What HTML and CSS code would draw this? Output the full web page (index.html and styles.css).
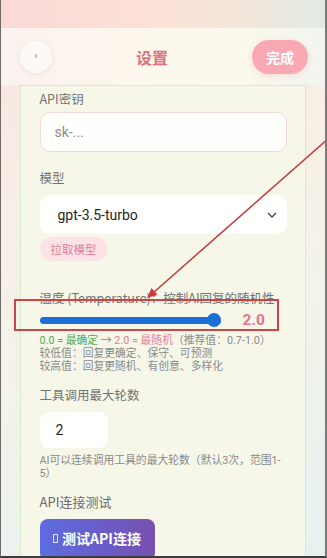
FILE: index.html
```html
<!DOCTYPE html>
<html lang="zh">
<head>
<meta charset="utf-8">
<title>设置</title>
<link rel="stylesheet" href="styles.css">
</head>
<body>
<div class="page">
  <div class="status"></div>
  <header class="header">
    <button class="back">‹</button>
    <h1 class="title">设置</h1>
    <button class="done">完成</button>
  </header>
  <main class="card">
    <div class="field">
      <label class="label">API密钥</label>
      <div class="input placeholder">sk-...</div>
    </div>
    <div class="field">
      <label class="label">模型</label>
      <div class="select">
        <span>gpt-3.5-turbo</span>
        <svg class="chev" width="10" height="6" viewBox="0 0 10 6"><path d="M1 1l4 4 4-4" fill="none" stroke="#444" stroke-width="1.3"/></svg>
      </div>
      <button class="fetch">拉取模型</button>
    </div>
    <div class="field temp">
      <label class="label">温度 (Temperature)：控制AI回复的随机性</label>
      <div class="slider-row">
        <div class="slider"><div class="track"></div><div class="thumb"></div></div>
        <span class="value">2.0</span>
      </div>
      <div class="desc">
        <div class="line"><span class="green">0.0 = 最确定</span> → <span class="pink">2.0 = 最随机</span>（推荐值：0.7-1.0）</div>
        <div class="line">较低值：回复更确定、保守、可预测</div>
        <div class="line">较高值：回复更随机、有创意、多样化</div>
      </div>
    </div>
    <div class="field tight">
      <label class="label">工具调用最大轮数</label>
      <div class="num">2</div>
      <div class="desc desc2">AI可以连续调用工具的最大轮数（默认3次，范围1-5）</div>
    </div>
    <div class="field tight">
      <label class="label label-test">API连接测试</label>
      <button class="test"><span class="tofu"></span>测试API连接</button>
    </div>
  </main>
  <div class="redbox"></div>
  <svg class="arrow" width="327" height="558" viewBox="0 0 327 558">
    <line x1="330" y1="137" x2="153" y2="293" stroke="#c23a3c" stroke-width="1.5"/>
    <polygon points="147,298 157.5,294.8 151.5,288" fill="#d0383a"/>
  </svg>
  <div class="frame"></div>
</div>
</body>
</html>
```
FILE: styles.css
```css
* { box-sizing: border-box; }
html, body { margin: 0; padding: 0; }
body {
  width: 327px;
  height: 558px;
  overflow: hidden;
  font-family: Roboto, "Noto Sans CJK SC", sans-serif;
}
.page {
  position: relative;
  width: 327px;
  height: 558px;
  overflow: hidden;
  background: linear-gradient(160deg, #f8e4de 0%, #f8efe6 35%, #f2f3ea 60%, #e6f1f0 100%);
}
.status {
  height: 28px;
  background: linear-gradient(90deg, #f8d9d6 0%, #fde1d6 45%, #f3e6da 75%, #e2eae4 100%);
}
.header {
  height: 57px;
  display: flex;
  align-items: center;
  justify-content: space-between;
  padding: 0 19px 0 20px;
  background: linear-gradient(90deg, #fbf1ef 0%, #fdf7ed 40%, #fbf8ec 75%, #f1f4ef 100%);
}
.back {
  width: 32px;
  height: 32px;
  border-radius: 50%;
  border: none;
  background: #fdf9f6;
  box-shadow: 0 1px 4px rgba(200, 170, 160, 0.25);
  color: #9a8f8c;
  font-size: 11px;
  padding: 0 0 2px 0;
  font-family: "DejaVu Sans", sans-serif;
}
.title {
  margin: 0;
  font-size: 16px;
  font-weight: 700;
  color: #e0707e;
  font-family: "Noto Sans CJK SC", sans-serif;
}
.done {
  width: 56px;
  height: 34px;
  border-radius: 17px;
  border: none;
  background: #f8a9b4;
  color: #fff;
  font-weight: 700;
  font-size: 14px;
  font-family: "Noto Sans CJK SC", sans-serif;
  box-shadow: 0 2px 6px rgba(248, 160, 175, 0.3);
}
.card {
  margin: 0 21px 0 20px;
  height: 480px;
  border: 1.5px solid #d4ebcc;
  border-bottom: none;
  background: #f6f7e9;
  padding: 4px 18px 0 18.5px;
  font-family: "Noto Sans CJK SC", sans-serif;
}
.field { display: flex; flex-direction: column; align-items: flex-start; }
.label {
  font-size: 12.5px;
  line-height: 18px;
  color: #737373;
}
.input {
  margin-top: 4px;
  width: 247px;
  height: 40px;
  border: 1.5px solid #f1dada;
  border-radius: 10px;
  background: #fffefd;
  padding-left: 14px;
  display: flex;
  align-items: center;
  font-family: Roboto, sans-serif;
  font-size: 14px;
  color: #8c8c8c;
}
.field + .field { margin-top: 17px; }
.select {
  margin-top: 8px;
  width: 247px;
  height: 39px;
  border-radius: 10px;
  background: #fffffe;
  display: flex;
  align-items: center;
  justify-content: space-between;
  padding: 0 10px 0 18px;
  font-family: Roboto, sans-serif;
  font-size: 14px;
  color: #1f1f1f;
}
.chev { margin-top: 1px; }
.fetch {
  margin-top: 3px;
  width: 68px;
  height: 24px;
  border: none;
  border-radius: 12px;
  background: #fce3e5;
  color: #e0809a;
  font-size: 11.5px;
  font-family: "Noto Sans CJK SC", sans-serif;
  padding: 0;
}
.field.temp { margin-top: 28px; }
.field.tight { margin-top: 13px; }
.slider-row {
  margin-top: 1px;
  display: flex;
  align-items: center;
  height: 24px;
}
.slider {
  position: relative;
  width: 181px;
  height: 14px;
  display: flex;
  align-items: center;
}
.track {
  width: 100%;
  height: 7px;
  border-radius: 4px;
  background: #1b6fd6;
}
.thumb {
  position: absolute;
  right: 0;
  top: 0;
  width: 14px;
  height: 14px;
  border-radius: 50%;
  background: #1b6fd6;
}
.value {
  margin-left: 22px;
  font-family: Roboto, sans-serif;
  font-weight: 700;
  font-size: 15.5px;
  color: #e0768f;
}
.desc {
  margin-top: 2px;
  font-family: Roboto, "Noto Sans CJK SC", sans-serif;
  font-size: 10.8px;
  line-height: 13px;
  color: #8a8a8a;
}
.line { height: 13px; white-space: nowrap; }
.green { color: #54a954; }
.pink { color: #e3809a; }
.num {
  margin-top: 8px;
  width: 68px;
  height: 36px;
  border-radius: 9px;
  background: #fffffe;
  display: flex;
  align-items: center;
  padding-left: 16px;
  font-family: Roboto, sans-serif;
  font-size: 14px;
  color: #222;
}
.desc2 { margin-top: 6px; width: 247px; }
.label-test { color: #6b6b6b; font-size: 13px; }
.test {
  margin-top: 8px;
  width: 115px;
  height: 42px;
  border: none;
  border-radius: 8px;
  background: linear-gradient(90deg, #5d6de0 0%, #6a5cc8 55%, #7650ae 100%);
  color: #fff;
  font-family: "Noto Sans CJK SC", sans-serif;
  font-weight: 700;
  font-size: 14px;
  display: flex;
  align-items: center;
  justify-content: center;
  padding: 0 0 4px 0;
}
.tofu {
  display: inline-block;
  width: 5px;
  height: 9px;
  border: 1px solid rgba(255,255,255,0.8);
  margin-right: 4px;
}
.redbox {
  position: absolute;
  left: 14px;
  top: 299px;
  width: 265px;
  height: 32px;
  border: 2px solid #cb4446;
}
.arrow {
  position: absolute;
  left: 0;
  top: 0;
}
.frame {
  position: absolute;
  inset: 0;
  border-left: 1px solid #6d6a68;
  border-right: 2px solid #7a7a7a;
  border-bottom: 2px solid #3c3c3c;
  pointer-events: none;
}
```
